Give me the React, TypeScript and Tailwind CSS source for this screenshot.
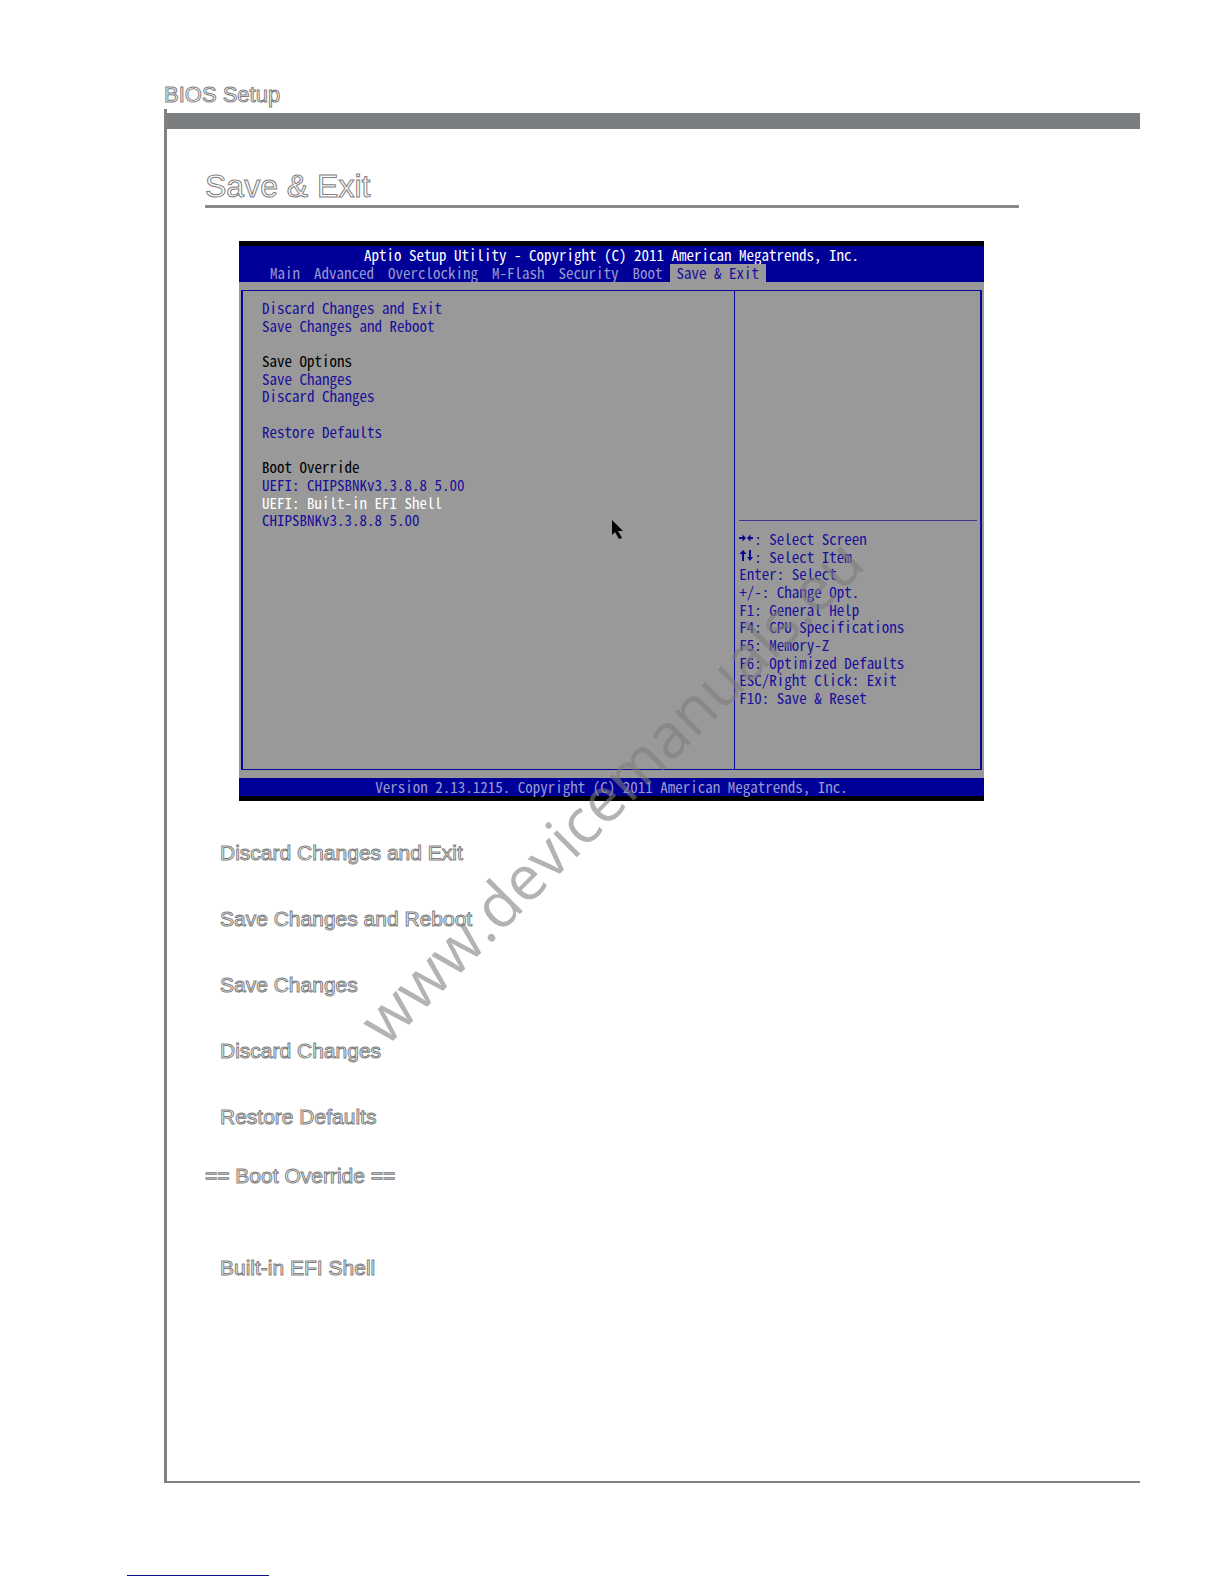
import { ReactNode } from "react";

const tabs = ["Main", "Advanced", "Overclocking", "M-Flash", "Security", "Boot", "Save & Exit"];

const menuRows = [
  { text: "Discard Changes and Exit", tone: "text-[#1a0f9c]" },
  { text: "Save Changes and Reboot", tone: "text-[#1a0f9c]" },
  { text: "", tone: "" },
  { text: "Save Options", tone: "text-black" },
  { text: "Save Changes", tone: "text-[#1a0f9c]" },
  { text: "Discard Changes", tone: "text-[#1a0f9c]" },
  { text: "", tone: "" },
  { text: "Restore Defaults", tone: "text-[#1a0f9c]" },
  { text: "", tone: "" },
  { text: "Boot Override", tone: "text-black" },
  { text: "UEFI: CHIPSBNKv3.3.8.8 5.00", tone: "text-[#1a0f9c]" },
  { text: "UEFI: Built-in EFI Shell", tone: "text-white" },
  { text: "CHIPSBNKv3.3.8.8 5.00", tone: "text-[#1a0f9c]" },
];

const helpRows: { icon?: ReactNode; text: string }[] = [
  { icon: <LeftRightArrows />, text: ": Select Screen" },
  { icon: <UpDownArrows />, text: ": Select Item" },
  { text: "Enter: Select" },
  { text: "+/-: Change Opt." },
  { text: "F1: General Help" },
  { text: "F4: CPU Specifications" },
  { text: "F5: Memory-Z" },
  { text: "F6: Optimized Defaults" },
  { text: "ESC/Right Click: Exit" },
  { text: "F10: Save & Reset" },
];

const topics = [
  "Discard Changes and Exit",
  "Save Changes and Reboot",
  "Save Changes",
  "Discard Changes",
  "Restore Defaults",
];

function LeftRightArrows() {
  return (
    <svg width="15" height="14" viewBox="0 0 15 14" fill="#0a0696" aria-hidden="true">
      <path d="M0 5h3.500V2.500L7 6 3.500 9.500V7H0zM14 5h-2.500V2.500L8 6l3.500 3.500V7H14z" />
    </svg>
  );
}

function UpDownArrows() {
  return (
    <svg width="15" height="14" viewBox="0 0 15 14" fill="#0a0696" aria-hidden="true">
      <path d="M3 11V4H.5L4 0l3.500 4H5v7zM10 0v7H8l3 4 3-4h-2V0z" />
    </svg>
  );
}

function BiosScreen() {
  return (
    <section
      aria-label="Aptio Setup Utility"
      className="relative border-y-5 border-black bg-[#999999] font-['Noto_Sans_Mono_CJK_SC','Noto_Sans_CJK_SC',monospace] text-[15px] leading-[18px] whitespace-pre [font-feature-settings:'hwid']"
    >
      <header className="bg-[#000099]">
        <p className="text-center text-white">
          Aptio Setup Utility - Copyright (C) 2011 American Megatrends, Inc.
        </p>
        <nav className="flex pl-6">
          {tabs.map((tab) => (
            <button
              key={tab}
              className={
                tab === "Save & Exit"
                  ? "bg-[#999999] px-[7px] text-[#1a0f9c]"
                  : "px-[7px] text-[#9999cc]"
              }
            >
              {tab}
            </button>
          ))}
        </nav>
      </header>

      <div className="px-0.5 py-2">
        <div className="grid h-[480px] grid-cols-[2fr_1fr] border-x-2 border-y border-[#0a0696]">
          <ul className="grid h-[238px] auto-rows-fr pt-2 pl-[19px]">
            {menuRows.map((row, i) => (
              <li key={i} className={row.tone}>
                {row.text}
              </li>
            ))}
          </ul>
          <aside className="flex flex-col justify-end border-l border-[#0a0696] pb-[62px] pl-1">
            <hr className="mr-[3px] mb-[9px] border-[#3a3590]" />
            <ul className="grid h-[177px] auto-rows-fr text-[#1a0f9c]">
              {helpRows.map((row) => (
                <li key={row.text} className="flex items-center">
                  {row.icon}
                  {row.text}
                </li>
              ))}
            </ul>
          </aside>
        </div>
      </div>

      <footer className="bg-[#000099] text-center text-[#9999cc]">
        Version 2.13.1215. Copyright (C) 2011 American Megatrends, Inc.
      </footer>

      {/* mouse pointer */}
      <svg className="absolute top-[274px] left-[373px]" width="12" height="20" viewBox="0 0 12 20" aria-hidden="true">
        <path d="M0 0v15l3-3 4 7 3-1-4-7h5z" fill="#000" />
      </svg>
    </section>
  );
}

export default function App() {
  return (
    <div className="relative overflow-hidden bg-white pt-[80px] pb-2 font-['Liberation_Sans',sans-serif] text-white">
      <div className="mr-[84px] ml-[164px]">
        <p className="text-[22px] leading-[29px] [-webkit-text-stroke:1px_#808080]">BIOS Setup</p>
        <main className="border-b-2 border-l-3 border-[#808080] pt-1 pb-[180px]">
          <div className="h-4 bg-[#7b7e80]" />
          <div className="mr-[121px] ml-[38px]">
            <h1 className="border-b-3 border-[#8a8a8a] pt-[38px] text-[32px] leading-[38px] [-webkit-text-stroke:1px_#808080]">
              Save &amp; Exit
            </h1>
            <div className="mt-[33px] mr-[35px] ml-[34px]">
              <BiosScreen />
            </div>
            <div className="pt-[19px] text-[21px] leading-[66px] [-webkit-text-stroke:1px_#808080]">
              {topics.map((topic) => (
                <h3 key={topic} className="pl-[15px]">
                  {topic}
                </h3>
              ))}
              <h2 className="-mt-[7px]">== Boot Override ==</h2>
              <h3 className="mt-[26px] pl-[15px]">Built-in EFI Shell</h3>
            </div>
          </div>
        </main>
      </div>
      <hr className="mt-[92px] ml-[127px] w-[142px] border-[#10108c]" />

      <div className="pointer-events-none absolute top-[790px] left-[610px] -translate-x-1/2 -translate-y-1/2 -rotate-45 font-['Open_Sans','Noto_Sans',sans-serif] text-[62px] leading-none whitespace-nowrap text-[#7c7c7c]/58">
        www.devicemanuals.eu
      </div>
    </div>
  );
}
